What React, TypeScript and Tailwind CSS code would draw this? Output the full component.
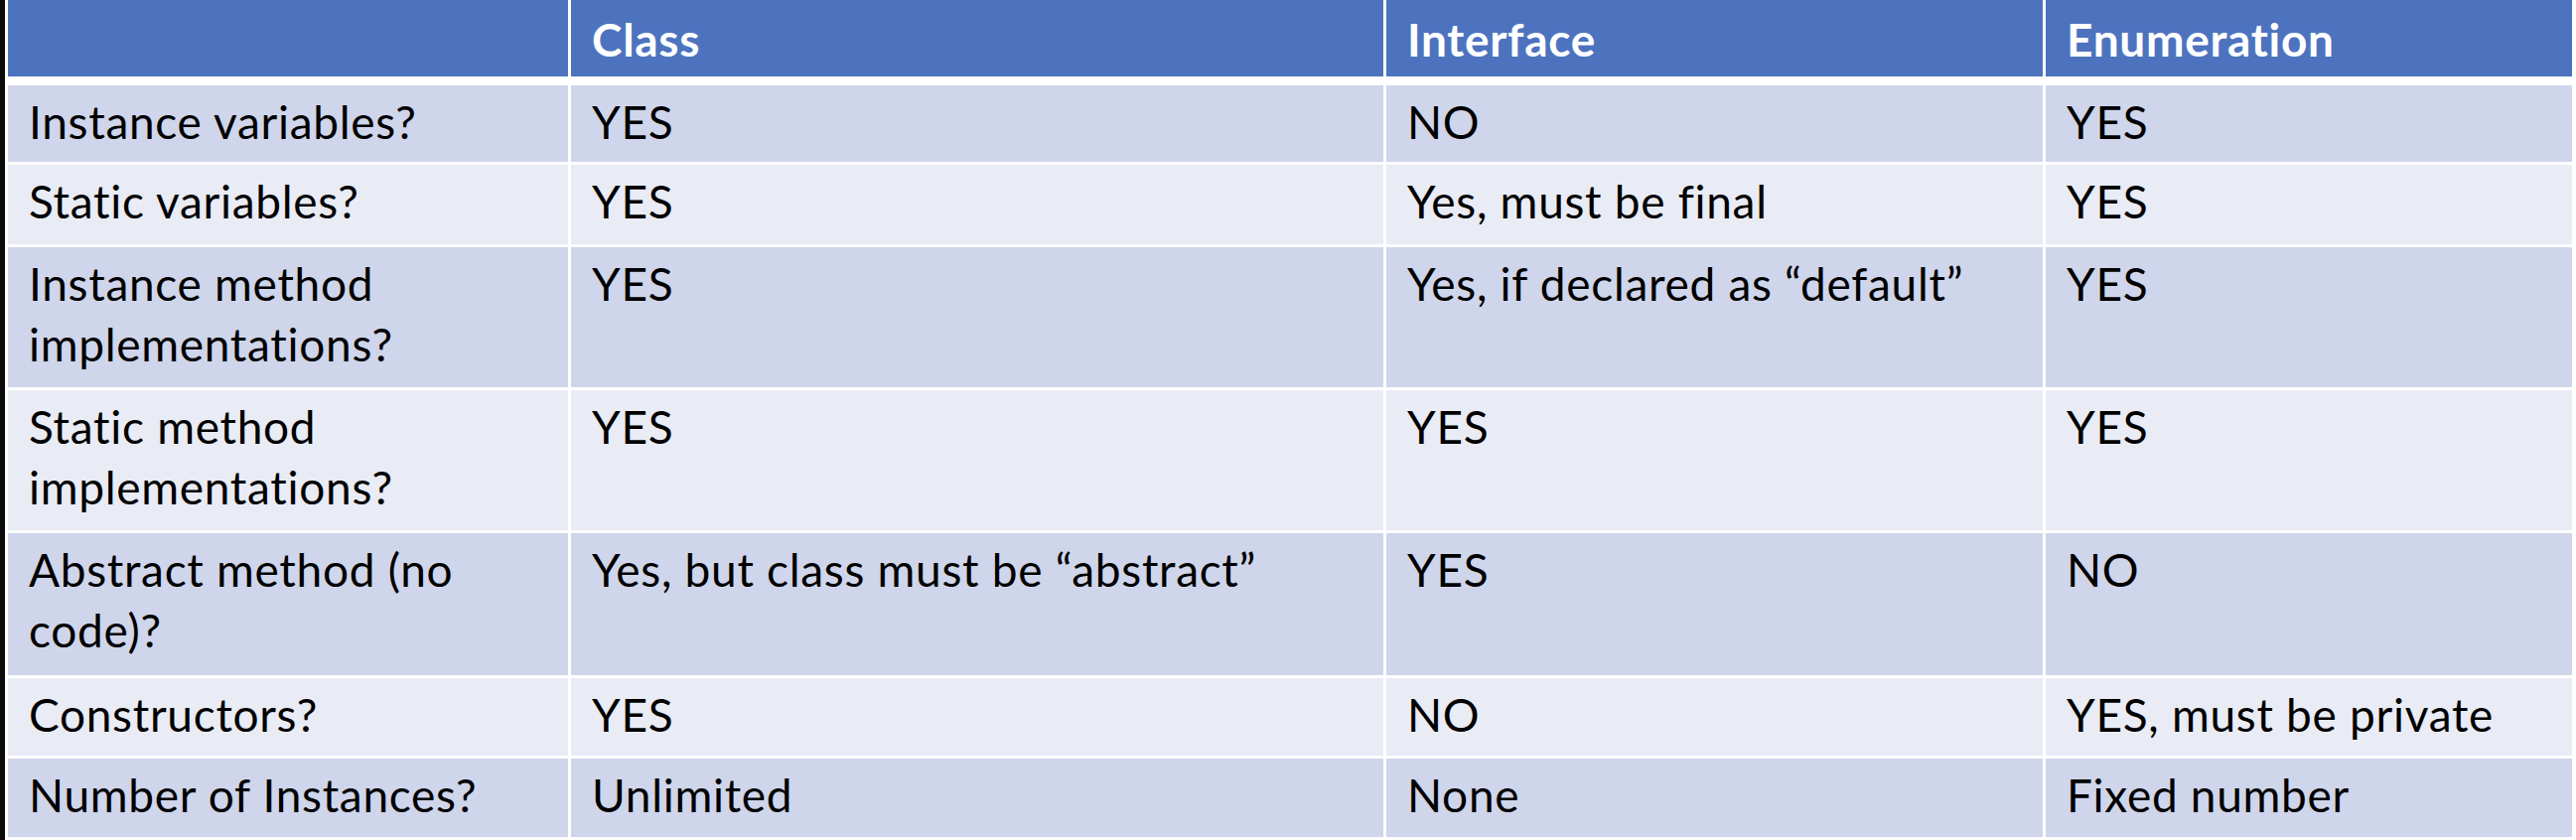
import React from 'react';

type Row = {
  label: string;
  cells: [string, string, string];
  height: string;
  bg: string;
};

const rows: Row[] = [
  { label: 'Instance variables?', cells: ['YES', 'NO', 'YES'], height: 'h-[77px]', bg: 'bg-[#cfd5ea]' },
  { label: 'Static variables?', cells: ['YES', 'Yes, must be final', 'YES'], height: 'h-[80px]', bg: 'bg-[#e9ebf5]' },
  {
    label: 'Instance method implementations?',
    cells: ['YES', 'Yes, if declared as \u201cdefault\u201d', 'YES'],
    height: 'h-[141px]',
    bg: 'bg-[#cfd5ea]',
  },
  {
    label: 'Static method implementations?',
    cells: ['YES', 'YES', 'YES'],
    height: 'h-[141px]',
    bg: 'bg-[#e9ebf5]',
  },
  {
    label: 'Abstract method (no code)?',
    cells: ['Yes, but class must be \u201cabstract\u201d', 'YES', 'NO'],
    height: 'h-[143px]',
    bg: 'bg-[#cfd5ea]',
  },
  { label: 'Constructors?', cells: ['YES', 'NO', 'YES, must be private'], height: 'h-[78px]', bg: 'bg-[#e9ebf5]' },
  { label: 'Number of Instances?', cells: ['Unlimited', 'None', 'Fixed number'], height: 'h-[79px]', bg: 'bg-[#cfd5ea]' },
];

const headers = ['', 'Class', 'Interface', 'Enumeration'];

const cellText =
  "px-[21px] text-[46px] leading-[61px] tracking-[0.7px] [font-variant-ligatures:none] font-['Lato',sans-serif]";

const App: React.FC = () => {
  return (
    <div className="w-[2594px] h-[846px] bg-white flex overflow-hidden">
      {/* dark edge of the slide */}
      <div className="w-[5px] h-full bg-[#0b0b0b]" />

      <div className="flex flex-col gap-[3px] pl-[3px] pr-[4px]">
        {/* Header */}
        <div className="grid grid-cols-[564px_818px_661px_530px] gap-x-[3px] h-[77px] mb-[6px]">
          {headers.map((h, i) => (
            <div key={i} className={`bg-[#4d73bf] text-white font-bold pt-[9px] ${cellText}`}>
              {h}
            </div>
          ))}
        </div>

        {/* Body */}
        {rows.map((row) => (
          <div
            key={row.label}
            className={`grid grid-cols-[564px_818px_661px_530px] gap-x-[3px] ${row.height}`}
          >
            <div className={`${row.bg} text-black pt-[6px] ${cellText}`}>{row.label}</div>
            {row.cells.map((c, i) => (
              <div key={i} className={`${row.bg} text-black pt-[6px] ${cellText}`}>
                {c}
              </div>
            ))}
          </div>
        ))}
      </div>
    </div>
  );
};

export default App;
